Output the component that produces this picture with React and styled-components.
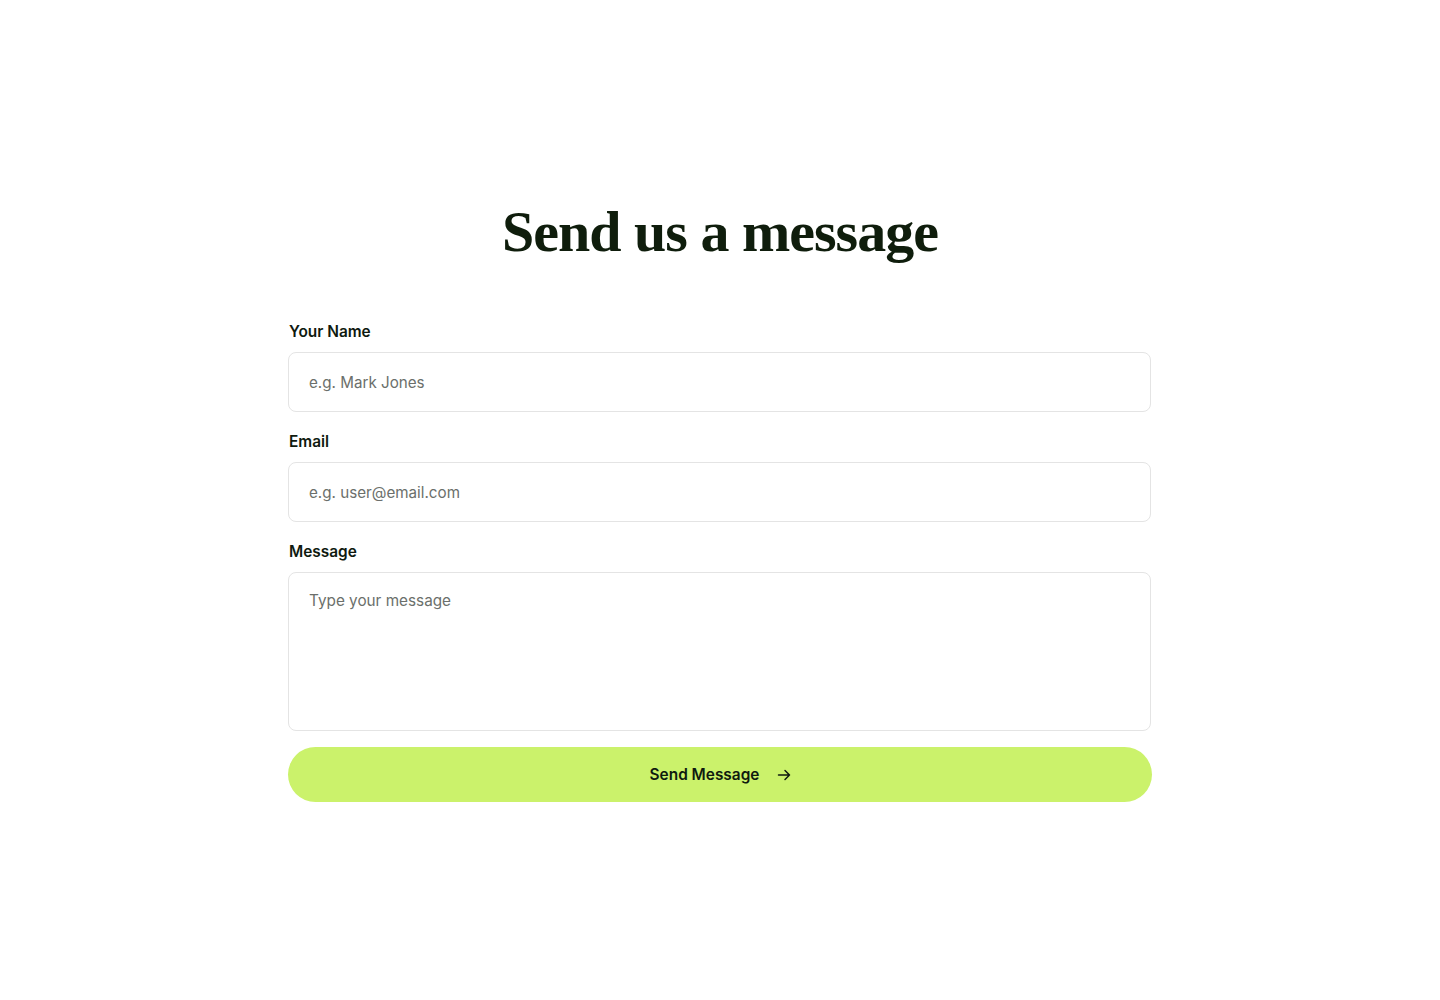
import React from "react";
import styled, { createGlobalStyle } from "styled-components";

const GlobalStyle = createGlobalStyle`
  html, body {
    margin: 0;
    padding: 0;
    background: #ffffff;
  }
  body {
    font-family: Inter, "Liberation Sans", sans-serif;
    color: #0f1a0f;
  }
  * {
    box-sizing: border-box;
  }
`;

const Page = styled.div`
  width: 100%;
  min-height: 1000px;
  padding-top: 196px;
`;

const Container = styled.div`
  width: 864px;
  margin: 0 auto;
`;

const Title = styled.h1`
  font-family: "Liberation Serif", "DejaVu Serif", serif;
  font-weight: 700;
  font-size: 58px;
  line-height: 72px;
  letter-spacing: -1px;
  color: #0f1d0c;
  text-align: center;
  margin: 0 0 54px;
`;

const Form = styled.form`
  display: flex;
  flex-direction: column;
`;

const Field = styled.div`
  display: flex;
  flex-direction: column;
  gap: 10px;
  margin-bottom: ${({ $last }) => ($last ? "16px" : "20px")};
`;

const Label = styled.label`
  font-size: 15.4px;
  font-weight: 600;
  line-height: 20px;
  color: #0f1a0f;
  padding-left: 1px;
`;

const Input = styled.input`
  width: calc(100% - 1px);
  height: 60px;
  border: 1px solid #e4e4e4;
  border-radius: 8px;
  padding: 0 20px;
  font-family: Inter, "Liberation Sans", sans-serif;
  font-size: 15.2px;
  color: #0f1a0f;
  background: #fff;
  outline: none;
  &::placeholder {
    color: #6b6f6b;
  }
`;

const TextArea = styled.textarea`
  width: calc(100% - 1px);
  height: 159px;
  border: 1px solid #e4e4e4;
  border-radius: 8px;
  padding: 17px 20px;
  font-family: Inter, "Liberation Sans", sans-serif;
  font-size: 15.3px;
  line-height: 22px;
  color: #0f1a0f;
  background: #fff;
  resize: none;
  outline: none;
  &::placeholder {
    color: #6b6f6b;
  }
`;

const Button = styled.button`
  width: 100%;
  height: 55px;
  border: none;
  border-radius: 28px;
  background: #cbf26b;
  display: flex;
  align-items: center;
  justify-content: center;
  gap: 17px;
  font-family: Inter, "Liberation Sans", sans-serif;
  font-size: 15.4px;
  font-weight: 600;
  color: #0f1a0f;
  cursor: pointer;
  padding-left: 8px;
`;

const Arrow = () => (
  <svg width="16" height="16" viewBox="0 0 16 16" fill="none">
    <path
      d="M2.5 8h11M9 3.5 13.5 8 9 12.5"
      stroke="#0f1a0f"
      strokeWidth="1.5"
      strokeLinecap="round"
      strokeLinejoin="round"
    />
  </svg>
);

export default function App() {
  return (
    <Page>
      <GlobalStyle />
      <Container>
        <Title>Send us a message</Title>
        <Form onSubmit={e => e.preventDefault()}>
          <Field>
            <Label>Your Name</Label>
            <Input placeholder="e.g. Mark Jones" />
          </Field>
          <Field>
            <Label>Email</Label>
            <Input placeholder="e.g. user@email.com" />
          </Field>
          <Field $last>
            <Label>Message</Label>
            <TextArea placeholder="Type your message" />
          </Field>
          <Button type="submit">
            Send Message
            <Arrow />
          </Button>
        </Form>
      </Container>
    </Page>
  );
}
